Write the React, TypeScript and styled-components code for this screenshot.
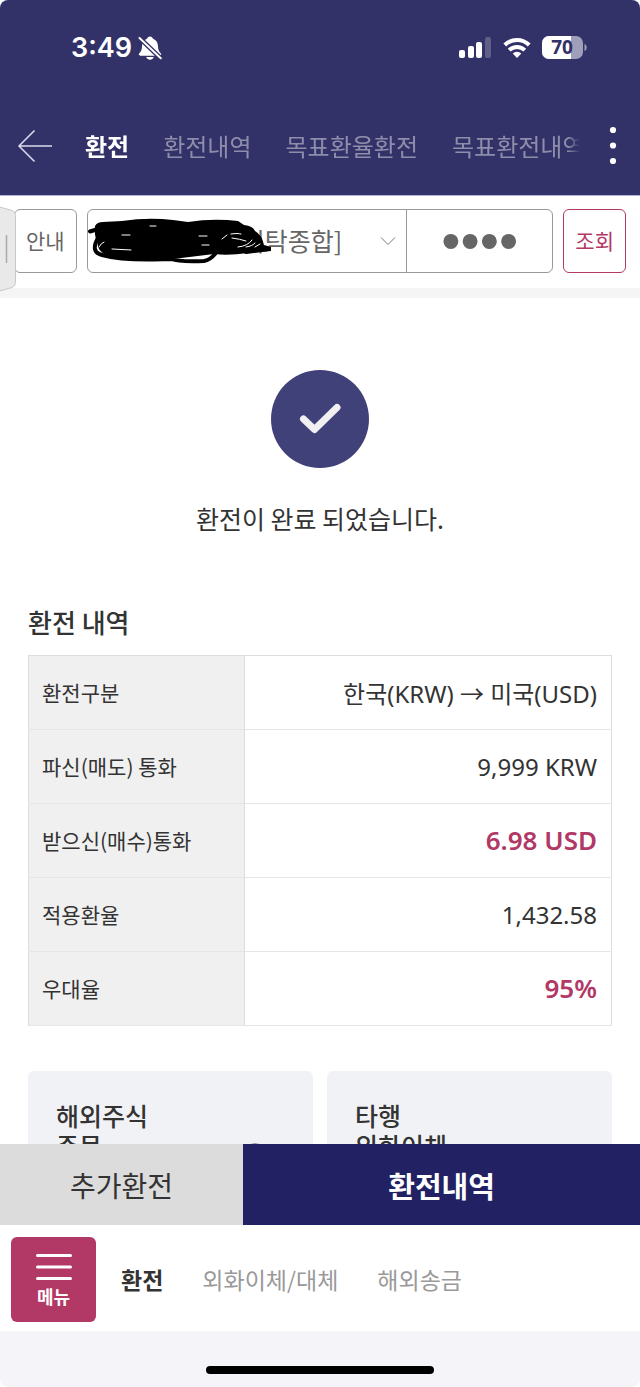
import React from "react";
import styled, { createGlobalStyle, css } from "styled-components";

const GlobalStyle = createGlobalStyle`
  *, *::before, *::after { box-sizing: border-box; }
  body {
    margin: 0;
    background: #ffffff;
    color: #333333;
    font-family: "Noto Sans CJK KR", "Noto Sans", sans-serif;
    font-size: 24px;
  }
  button, input, select { font-family: inherit; margin: 0; }
  a { color: inherit; text-decoration: none; }
`;

const Screen = styled.div`
  display: flex;
  flex-direction: column;
  height: 100vh;
  overflow: hidden;
  border-radius: 8px;
  background: #ffffff;
`;

const Header = styled.header`
  flex: none;
  background: #333268;
  border-bottom: 1px solid #b3b3dd;
`;

const StatusBar = styled.div`
  display: flex;
  justify-content: space-between;
  align-items: center;
  height: 96px;
  padding: 0 53px 0 71px;
  color: #ffffff;
`;

const StatusGroup = styled.div<{ $gap: number }>`
  display: flex;
  align-items: center;
  gap: ${(p) => p.$gap}px;
`;

const Clock = styled.time`
  font-family: Inter, sans-serif;
  font-size: 27px;
  font-weight: 600;
  line-height: 32px;
`;

const TabBar = styled.div`
  display: flex;
  align-items: center;
  height: 99px;
  padding: 0 10px 0 16px;
`;

const IconButton = styled.button`
  display: flex;
  flex: none;
  padding: 0;
  border: 0;
  background: none;
  color: #ffffff;
`;

const Tabs = styled.nav`
  display: flex;
  flex: 1;
  gap: 34px;
  min-width: 0;
  margin: 0 20px 0 31px;
  overflow: hidden;
  mask-image: linear-gradient(to right, #000 calc(100% - 12px), transparent);
`;

const Tab = styled.a<{ $active?: boolean }>`
  flex: none;
  font-size: 24px;
  line-height: 36px;
  white-space: nowrap;
  color: ${(p) => (p.$active ? "#ffffff" : "#8e8dab")};
  font-weight: ${(p) => (p.$active ? 700 : 400)};
`;

const QueryBar = styled.form`
  position: relative;
  display: flex;
  flex: none;
  align-items: center;
  gap: 10px;
  height: 102px;
  padding: 2px 14px 4px 14px;
  border-bottom: 10px solid #f5f5f5;
`;

const DrawerHandle = styled.button`
  position: absolute;
  left: 0;
  top: 9px;
  display: flex;
  padding: 0;
  border: 0;
  background: none;
`;

const OutlineButton = styled.button<{ $accent?: boolean }>`
  flex: none;
  height: 64px;
  padding: 0 11px;
  border: 1px solid ${(p) => (p.$accent ? "#b23866" : "#999999")};
  border-radius: 6px;
  background: #ffffff;
  color: ${(p) => (p.$accent ? "#b23866" : "#666666")};
  font-size: 21px;
  line-height: 30px;
  padding-bottom: 2px;
`;

const AccountField = styled.div`
  position: relative;
  display: flex;
  flex: 1;
  height: 64px;
  min-width: 0;
  border: 1px solid #999999;
  border-radius: 6px;
`;

const AccountSelectBox = styled.label`
  position: relative;
  display: flex;
  flex: 1;
  align-items: center;
  min-width: 0;
`;

const AccountSelect = styled.select`
  width: 100%;
  height: 62px;
  padding: 0 40px 2px 154px;
  border: 0;
  background: none;
  appearance: none;
  color: #666666;
  font-size: 25px;
`;

const SelectChevron = styled.svg`
  position: absolute;
  right: 10px;
  pointer-events: none;
`;

const Redaction = styled.svg`
  position: absolute;
  left: 0;
  top: 8px;
  pointer-events: none;
`;

const PinInput = styled.input`
  flex: none;
  width: 146px;
  height: 62px;
  padding: 0;
  border: 0;
  border-left: 1px solid #999999;
  background: none;
  color: #666666;
  font-family: "Liberation Sans", sans-serif;
  font-size: 55px;
  line-height: 62px;
  text-align: center;
`;

const Content = styled.main`
  flex: 1;
  min-height: 0;
  padding: 72px 28px 0;
  overflow: hidden;
`;

const Result = styled.section`
  display: flex;
  flex-direction: column;
  align-items: center;
  gap: 32px;
  margin-bottom: 67px;
`;

const ResultText = styled.p`
  margin: 0;
  font-size: 25px;
  line-height: 36px;
`;

const SectionTitle = styled.h2`
  margin: 0 0 14px;
  font-size: 26px;
  font-weight: 500;
  line-height: 38px;
`;

const DetailTable = styled.table`
  width: 100%;
  border-collapse: collapse;
  table-layout: fixed;
  border: 1px solid #dddddd;
`;

const DetailRow = styled.tr`
  height: 74px;
  border-bottom: 1px solid #e6e6e6;
`;

const DetailLabel = styled.th`
  width: 37%;
  padding: 0 13px 2px;
  border-right: 1px solid #dddddd;
  background: #f0f0f0;
  font-size: 21px;
  font-weight: 400;
  text-align: left;
`;

const DetailValue = styled.td<{ $accent?: boolean }>`
  padding: 0 14px 1px;
  font-family: "Noto Sans", "Noto Sans CJK KR", sans-serif;
  font-size: 24px;
  text-align: right;
  ${(p) =>
    p.$accent &&
    css`
      color: #b23866;
      font-size: 26px;
      font-weight: 600;
    `}
`;

const CardGrid = styled.div`
  display: grid;
  grid-template-columns: 1fr 1fr;
  gap: 14px;
  margin-top: 45px;
`;

const Card = styled.a`
  display: flex;
  justify-content: space-between;
  align-items: flex-end;
  height: 140px;
  padding: 29px 28px 8px;
  border-radius: 6px;
  background: #f1f2f6;
`;

const CardTitle = styled.span`
  align-self: flex-start;
  font-size: 25px;
  font-weight: 500;
  line-height: 30px;
`;

const ActionBar = styled.div`
  display: flex;
  flex: none;
  height: 81px;
`;

const ActionButton = styled.button<{ $primary?: boolean }>`
  flex: ${(p) => (p.$primary ? "62 0 0" : "38 0 0")};
  padding: 0;
  border: 0;
  background: ${(p) => (p.$primary ? "#212163" : "#dcdcdc")};
  color: ${(p) => (p.$primary ? "#ffffff" : "#333333")};
  font-size: ${(p) => (p.$primary ? 29 : 28)}px;
  font-weight: ${(p) => (p.$primary ? 700 : 400)};
`;

const BottomNav = styled.nav`
  display: flex;
  flex: none;
  align-items: center;
  height: 106px;
  padding: 2px 11px 0;
`;

const MenuButton = styled.button`
  display: flex;
  flex: none;
  flex-direction: column;
  align-items: center;
  justify-content: center;
  gap: 2px;
  width: 85px;
  height: 85px;
  margin-right: 25px;
  padding: 4px 0 0;
  border: 0;
  border-radius: 6px;
  background: #b23866;
  color: #ffffff;
  font-size: 18px;
  font-weight: 700;
  line-height: 26px;
`;

const NavLinks = styled.div`
  display: flex;
  gap: 39px;
`;

const NavLink = styled.a<{ $active?: boolean }>`
  font-size: 23px;
  line-height: 34px;
  white-space: nowrap;
  color: ${(p) => (p.$active ? "#333333" : "#999999")};
  font-weight: ${(p) => (p.$active ? 700 : 400)};
`;

const HomeArea = styled.footer`
  display: flex;
  flex: none;
  justify-content: center;
  align-items: flex-end;
  height: 56px;
  padding-bottom: 13px;
  background: #f5f5f9;
`;

const HomeIndicator = styled.div`
  width: 228px;
  height: 8px;
  border-radius: 4px;
  background: #000000;
`;

const BellOffIcon = () => (
  <svg width="24" height="24" viewBox="0 0 24 24" aria-hidden="true">
    <path
      d="M12 .5c1.600 0 2.700 1 3 2.300C18.500 4 20 7 20 10.500c.1 3.500.9 4.700 2.300 6.300.6.700.9 1.200.9 1.700 0 .8-.6 1.200-1.400 1.200H2.200c-.8 0-1.400-.4-1.400-1.200 0-.5.3-1 .9-1.700C3.100 15.200 3.900 14 4 10.500 4 7 5.500 4 9 2.800 9.300 1.500 10.400.5 12 .5z"
      fill="#fff"
    />
    <path d="M8.200 21h7.600c-.5 1.500-2 2.700-3.800 2.700S8.700 22.500 8.200 21z" fill="#fff" />
    <path d="M0 .5 24 23.500" stroke="#333268" strokeWidth="4.600" />
    <path d="M1.500 2 22.800 22.300" stroke="#fff" strokeWidth="1.900" strokeLinecap="round" />
  </svg>
);

const SignalIcon = () => (
  <svg width="33" height="22" viewBox="0 0 33 22" fill="#fff" aria-hidden="true">
    <rect x="0" y="13" width="6" height="8" rx="2" />
    <rect x="9" y="9" width="6" height="12" rx="2" />
    <rect x="17" y="5" width="6" height="16" rx="2" />
    <rect x="26" y="0" width="6" height="21" rx="2" opacity="0.22" />
  </svg>
);

const WifiIcon = () => (
  <svg width="28" height="22" viewBox="0 0 28 22" aria-hidden="true">
    <g fill="none" stroke="#fff" strokeWidth="4">
      <path d="M1.800 8a17.200 17.200 0 0 1 24.400 0" />
      <path d="M6.200 13.200a11 11 0 0 1 15.600 0" />
    </g>
    <path d="M9.700 16.600a6.200 6.200 0 0 1 8.600 0L14 21z" fill="#fff" />
  </svg>
);

const BatteryIcon = () => (
  <svg width="45" height="24" viewBox="0 0 45 24" role="img" aria-label="70%">
    <defs>
      <clipPath id="battery-shape">
        <rect width="41" height="23" rx="7" />
      </clipPath>
    </defs>
    <g clipPath="url(#battery-shape)">
      <rect width="41" height="23" fill="#9f9fba" />
      <rect width="29" height="23" fill="#fff" />
    </g>
    <path d="M42.500 8v7c1.500-.6 2.200-2 2.200-3.500S44 8.600 42.500 8z" fill="#9f9fba" />
    <text
      x="20"
      y="18"
      textAnchor="middle"
      fill="#333268"
      fontFamily="'Open Sans', sans-serif"
      fontSize="19"
      fontWeight="700"
    >
      70
    </text>
  </svg>
);

const BackIcon = () => (
  <svg width="38" height="36" viewBox="0 0 38 36" aria-hidden="true">
    <path d="M18.500 2.500 3 18l15.500 15.500M3 18h33" fill="none" stroke="#dcdcf0" strokeWidth="1.500" />
  </svg>
);

const MoreIcon = () => (
  <svg width="30" height="40" viewBox="0 0 30 40" fill="#fff" aria-hidden="true">
    <circle cx="13" cy="4" r="3.100" />
    <circle cx="13" cy="19.500" r="3.100" />
    <circle cx="13" cy="35" r="3.100" />
  </svg>
);

const HandleIcon = () => (
  <svg width="17" height="88" viewBox="0 0 17 88" aria-hidden="true">
    <path
      d="M-2 1.500 12 5.500q3.500 1.500 3.500 5v67q0 3.500-3.500 5l-14 4z"
      fill="#e9e9e9"
      stroke="#c8c8c8"
    />
    <path d="M6.500 30v28" stroke="#aaaaaa" strokeWidth="1.500" />
  </svg>
);

const ScribbleIcon = () => (
  <Redaction width="190" height="50" viewBox="0 0 190 50" fill="none" aria-hidden="true">
    <path
      d="M7 8Q9 4 15 4L34 3Q60-1 85 2L100 4Q125 0 150 3L156 7Q165 8 167 13Q174 17 176 27L183 29V33L160 35Q140 38 126 36L85 41Q45 42 18 37Q8 32 10 24Q6 20 7 8z"
      fill="#000"
    />
    <g stroke="#000" strokeWidth="4" strokeLinecap="round" strokeLinejoin="round">
      <path d="M2 13.500 10 11M10 20Q2 34 14 37Q32 42 66 41.500L84 41Q90 44 116 43Q122 42 127 36" />
      <path d="M158 34 181 31" />
    </g>
    <g stroke="#fff" strokeWidth="1" strokeLinecap="round">
      <path d="M11 29q2-4 5-5M24 31l19 1M62 8h6M34 17h8M111 18h8M114 27h7" />
      <path d="M134 21l5-4M143 16q7-1 10 0M144 20q8 1 14 3M150 29q10-1 14-7M158 29q7-1 9-4M167 29l5-3" />
    </g>
  </Redaction>
);

const CheckBadge = () => (
  <svg width="98" height="98" viewBox="0 0 98 98" aria-hidden="true">
    <circle cx="49" cy="49" r="49" fill="#404178" />
    <path
      d="M32.500 49 43.500 59.500 66 37.500"
      fill="none"
      stroke="#f0f0f2"
      strokeWidth="7"
      strokeLinecap="round"
      strokeLinejoin="round"
    />
  </svg>
);

const GlobeIcon = () => (
  <svg width="60" height="60" viewBox="0 0 60 60" fill="none" aria-hidden="true">
    <circle cx="30" cy="22" r="20" stroke="#333268" strokeWidth="3" />
    <path d="M10 22h40M30 2c-14 12-14 28 0 40M30 2c14 12 14 28 0 40" stroke="#333268" strokeWidth="2" />
  </svg>
);

const MenuIcon = () => (
  <svg width="36" height="28" viewBox="0 0 36 28" aria-hidden="true">
    <path
      d="M1.500 2.500h33M1.500 14h33M1.500 25.500h33"
      stroke="#fff"
      strokeWidth="3"
      strokeLinecap="round"
    />
  </svg>
);

const tabs = ["환전", "환전내역", "목표환율환전", "목표환전내역"];
const navItems = ["환전", "외화이체/대체", "해외송금"];
const details = [
  { label: "환전구분", value: "한국(KRW) → 미국(USD)" },
  { label: "파신(매도) 통화", value: "9,999 KRW" },
  { label: "받으신(매수)통화", value: "6.98 USD", accent: true },
  { label: "적용환율", value: "1,432.58" },
  { label: "우대율", value: "95%", accent: true },
];

export default function App() {
  return (
    <>
      <GlobalStyle />
      <Screen>
        <Header>
          <StatusBar>
            <StatusGroup $gap={6}>
              <Clock>3:49</Clock>
              <BellOffIcon />
            </StatusGroup>
            <StatusGroup $gap={11}>
              <SignalIcon />
              <WifiIcon />
              <BatteryIcon />
            </StatusGroup>
          </StatusBar>
          <TabBar>
            <IconButton type="button" aria-label="뒤로">
              <BackIcon />
            </IconButton>
            <Tabs>
              {tabs.map((tab, i) => (
                <Tab key={tab} href="#" $active={i === 0}>
                  {tab}
                </Tab>
              ))}
            </Tabs>
            <IconButton type="button" aria-label="더보기">
              <MoreIcon />
            </IconButton>
          </TabBar>
        </Header>

        <QueryBar onSubmit={(e) => e.preventDefault()}>
          <OutlineButton type="button">안내</OutlineButton>
          <AccountField>
            <AccountSelectBox>
              <AccountSelect aria-label="계좌" defaultValue="main">
                <option value="main">위탁종합]</option>
              </AccountSelect>
              <SelectChevron width="16" height="10" viewBox="0 0 16 10" aria-hidden="true">
                <path d="M1 1.500 8 8.500 15 1.500" fill="none" stroke="#777777" />
              </SelectChevron>
            </AccountSelectBox>
            <PinInput type="password" aria-label="비밀번호" defaultValue="0000" />
            <ScribbleIcon />
          </AccountField>
          <OutlineButton type="submit" $accent>
            조회
          </OutlineButton>
          <DrawerHandle type="button" aria-label="서랍 열기">
            <HandleIcon />
          </DrawerHandle>
        </QueryBar>

        <Content>
          <Result>
            <CheckBadge />
            <ResultText>환전이 완료 되었습니다.</ResultText>
          </Result>
          <SectionTitle>환전 내역</SectionTitle>
          <DetailTable>
            <tbody>
              {details.map((row) => (
                <DetailRow key={row.label}>
                  <DetailLabel scope="row">{row.label}</DetailLabel>
                  <DetailValue $accent={row.accent}>{row.value}</DetailValue>
                </DetailRow>
              ))}
            </tbody>
          </DetailTable>
          <CardGrid>
            <Card href="#">
              <CardTitle>
                해외주식
                <br />
                주문
              </CardTitle>
              <GlobeIcon />
            </Card>
            <Card href="#">
              <CardTitle>
                타행
                <br />
                외화이체
              </CardTitle>
            </Card>
          </CardGrid>
        </Content>

        <ActionBar>
          <ActionButton type="button">추가환전</ActionButton>
          <ActionButton type="button" $primary>
            환전내역
          </ActionButton>
        </ActionBar>
        <BottomNav>
          <MenuButton type="button">
            <MenuIcon />
            메뉴
          </MenuButton>
          <NavLinks>
            {navItems.map((item, i) => (
              <NavLink key={item} href="#" $active={i === 0}>
                {item}
              </NavLink>
            ))}
          </NavLinks>
        </BottomNav>
        <HomeArea>
          <HomeIndicator />
        </HomeArea>
      </Screen>
    </>
  );
}
